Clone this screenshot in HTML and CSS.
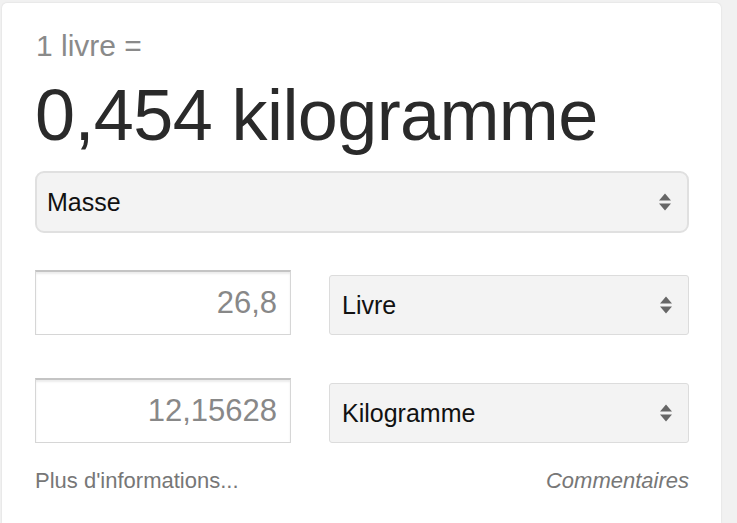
FILE: index.html
```html
<!DOCTYPE html>
<html lang="fr">
<head>
  <meta charset="UTF-8" />
  <title>Convertisseur</title>
  <link rel="stylesheet" href="styles.css">
</head>
<body>
  <div class="card">
    <div class="query">1 livre =</div>
    <div class="result">0,454 kilogramme</div>

    <div class="select select-wide">
      <span>Masse</span>
      <svg class="arrows" width="14" height="20" viewBox="0 0 14 20"><path d="M7 1.5 L13 8.5 H1 Z M7 18.5 L13 11.5 H1 Z" fill="#666"/></svg>
    </div>

    <div class="row">
      <input class="amount" type="text" value="26,8">
      <div class="select">
        <span>Livre</span>
        <svg class="arrows" width="14" height="20" viewBox="0 0 14 20"><path d="M7 1.5 L13 8.5 H1 Z M7 18.5 L13 11.5 H1 Z" fill="#666"/></svg>
      </div>
    </div>

    <div class="row">
      <input class="amount" type="text" value="12,15628">
      <div class="select">
        <span>Kilogramme</span>
        <svg class="arrows" width="14" height="20" viewBox="0 0 14 20"><path d="M7 1.5 L13 8.5 H1 Z M7 18.5 L13 11.5 H1 Z" fill="#666"/></svg>
      </div>
    </div>

    <div class="footer">
      <a href="#">Plus d'informations...</a>
      <a href="#" class="feedback">Commentaires</a>
    </div>
  </div>
</body>
</html>
```

FILE: styles.css
```css
body {
  margin: 0;
  background-color: #f1f1f1;
  font-family: "Liberation Sans", Arial, sans-serif;
  color: #222;
}

.card {
  margin: 3px 16px 0 2px;
  height: 520px;
  box-sizing: border-box;
  padding: 25px 32px 0 33px;
  background-color: #fff;
  border-radius: 5px 5px 0 0;
  box-shadow: 0 0 2px rgba(0, 0, 0, 0.12);
}

.query {
  font-size: 30px;
  line-height: 36px;
  color: #8a8a8a;
  margin-left: 1px;
}

.result {
  font-size: 72px;
  line-height: 84px;
  margin-top: 9px;
  color: #2a2a2a;
  letter-spacing: -0.6px;
}

.select {
  display: flex;
  align-items: center;
  justify-content: space-between;
  box-sizing: border-box;
  width: 360px;
  height: 60px;
  padding: 0 15px 0 12px;
  background-color: #f3f3f3;
  border: 1px solid #dcdcdc;
  border-radius: 3px;
  font-size: 25px;
  color: #111;
}

.select-wide {
  width: 100%;
  height: 62px;
  margin-top: 14px;
  border: 2px solid #e0e0e0;
  border-radius: 9px;
  padding-left: 10px;
}

.row {
  display: flex;
  align-items: flex-end;
  gap: 38px;
  margin-top: 37px;
}

.row + .row {
  margin-top: 43px;
}

.amount {
  box-sizing: border-box;
  width: 256px;
  height: 65px;
  margin: 0;
  padding: 0 13px 0 10px;
  border: 1px solid #d6d6d6;
  border-top: 2px solid #c4c4c4;
  border-radius: 0;
  box-shadow: inset 0 2px 2px rgba(0, 0, 0, 0.08);
  background-color: #fff;
  font-family: "Liberation Sans", Arial, sans-serif;
  font-size: 31px;
  color: #888;
  text-align: right;
  outline: none;
}

.footer {
  display: flex;
  justify-content: space-between;
  margin-top: 26px;
  font-size: 22px;
  line-height: 24px;
}

.footer a {
  color: #777;
  text-decoration: none;
}

.feedback {
  font-style: italic;
}
```
